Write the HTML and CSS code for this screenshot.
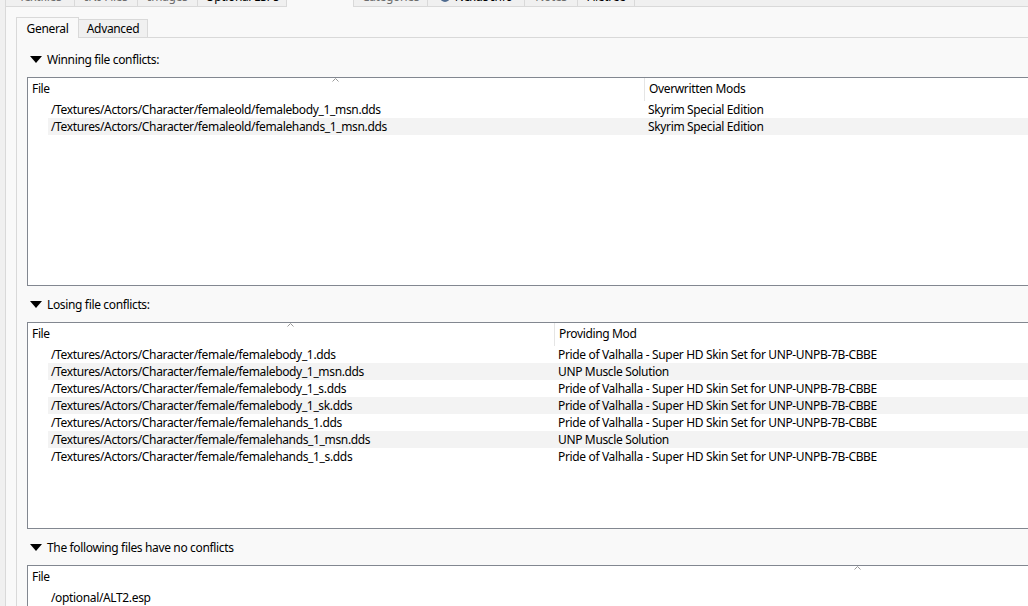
FILE: index.html
```html
<!DOCTYPE html>
<html lang="en">
<head>
  <meta charset="UTF-8" />
  <title>Conflicts</title>
  <link rel="stylesheet" href="styles.css">
</head>
<body>
  <div class="window">
    <div class="main-tabs">
      <div class="main-tab first" style="width:70px">Textfiles</div>
      <div class="main-tab" style="width:63px">INI-Files</div>
      <div class="main-tab" style="width:60px">Images</div>
      <div class="main-tab marked" style="width:89px">Optional ESPs</div>
      <div class="main-tab current" style="width:67px">Conflicts</div>
      <div class="main-tab" style="width:74px">Categories</div>
      <div class="main-tab marked" style="width:97px"><span class="globe"></span>Nexus Info</div>
      <div class="main-tab" style="width:53px">Notes</div>
      <div class="main-tab marked" style="width:57px">Filetree</div>
    </div>

    <div class="main-pane">
      <div class="sub-tabs">
        <div class="sub-tab current">General</div>
        <div class="sub-tab">Advanced</div>
      </div>

      <div class="sub-pane">
        <div class="group-head"><span class="caret"></span>Winning file conflicts:</div>
        <div class="list list-winning">
          <div class="list-head">
            <div class="head-cell file">File<svg class="sort" width="7" height="4" viewBox="0 0 7 4"><polyline points="0.5,3.5 3.5,0.5 6.5,3.5" fill="none" stroke="#9a9a9a" stroke-width="1"/></svg></div>
            <div class="head-cell">Overwritten Mods</div>
          </div>
          <div class="rows">
            <div class="row"><div class="file">/Textures/Actors/Character/femaleold/femalebody_1_msn.dds</div><div class="mod">Skyrim Special Edition</div></div>
            <div class="row"><div class="file">/Textures/Actors/Character/femaleold/femalehands_1_msn.dds</div><div class="mod">Skyrim Special Edition</div></div>
          </div>
        </div>

        <div class="group-head"><span class="caret"></span>Losing file conflicts:</div>
        <div class="list list-losing">
          <div class="list-head">
            <div class="head-cell file">File<svg class="sort" width="7" height="4" viewBox="0 0 7 4"><polyline points="0.5,3.5 3.5,0.5 6.5,3.5" fill="none" stroke="#9a9a9a" stroke-width="1"/></svg></div>
            <div class="head-cell">Providing Mod</div>
          </div>
          <div class="rows">
            <div class="row"><div class="file">/Textures/Actors/Character/female/femalebody_1.dds</div><div class="mod">Pride of Valhalla - Super HD Skin Set for UNP-UNPB-7B-CBBE</div></div>
            <div class="row"><div class="file">/Textures/Actors/Character/female/femalebody_1_msn.dds</div><div class="mod">UNP Muscle Solution</div></div>
            <div class="row"><div class="file">/Textures/Actors/Character/female/femalebody_1_s.dds</div><div class="mod">Pride of Valhalla - Super HD Skin Set for UNP-UNPB-7B-CBBE</div></div>
            <div class="row"><div class="file">/Textures/Actors/Character/female/femalebody_1_sk.dds</div><div class="mod">Pride of Valhalla - Super HD Skin Set for UNP-UNPB-7B-CBBE</div></div>
            <div class="row"><div class="file">/Textures/Actors/Character/female/femalehands_1.dds</div><div class="mod">Pride of Valhalla - Super HD Skin Set for UNP-UNPB-7B-CBBE</div></div>
            <div class="row"><div class="file">/Textures/Actors/Character/female/femalehands_1_msn.dds</div><div class="mod">UNP Muscle Solution</div></div>
            <div class="row"><div class="file">/Textures/Actors/Character/female/femalehands_1_s.dds</div><div class="mod">Pride of Valhalla - Super HD Skin Set for UNP-UNPB-7B-CBBE</div></div>
          </div>
        </div>

        <div class="group-head"><span class="caret"></span>The following files have no conflicts</div>
        <div class="list list-clean">
          <div class="list-head">
            <div class="head-cell file">File<svg class="sort" width="7" height="4" viewBox="0 0 7 4"><polyline points="0.5,3.5 3.5,0.5 6.5,3.5" fill="none" stroke="#9a9a9a" stroke-width="1"/></svg></div>
          </div>
          <div class="rows">
            <div class="row"><div class="file">/optional/ALT2.esp</div></div>
            <div class="row"><div class="file"></div></div>
          </div>
        </div>
      </div>
    </div>
  </div>
</body>
</html>
```

FILE: styles.css
```css
body {
  margin: 0;
  background: #f0f0f0;
  font-family: "Noto Sans", sans-serif;
  font-size: 12px;
  letter-spacing: -0.35px;
  color: #000;
  overflow: hidden;
}
.window {
  width: 1720px;
  padding-left: 5px;
}

/* top tab strip, mostly scrolled out of view */
.main-tabs {
  display: flex;
  align-items: flex-end;
  height: 20px;
  margin-top: -14px;
}
.main-tab {
  box-sizing: border-box;
  height: 20px;
  padding-top: 3px;
  line-height: 16px;
  text-align: center;
  white-space: nowrap;
  color: #6d6d6d;
  background: #f0f0f0;
  border-right: 1px solid #d9d9d9;
}
.main-tab.first {
  border-left: 1px solid #d9d9d9;
}
.main-tab.marked {
  color: #000;
}
.main-tab.current {
  position: relative;
  height: 21px;
  margin-bottom: -1px;
  padding-top: 0;
  color: #f9f9f9;
  background: #f9f9f9;
}
.globe {
  display: inline-block;
  width: 10px;
  height: 10px;
  margin-right: 5px;
  border-radius: 50%;
  background: #4f6b8f;
  vertical-align: -1px;
}

.main-pane {
  background: #f9f9f9;
  border-top: 1px solid #d9d9d9;
  border-left: 1px solid #d9d9d9;
  padding: 10px 0 0 10px;
}

/* General / Advanced */
.sub-tabs {
  display: flex;
  align-items: flex-end;
  height: 20px;
}
.sub-tab {
  box-sizing: border-box;
  width: 69px;
  height: 18px;
  line-height: 18px;
  text-align: center;
  background: #f0f0f0;
  border: 1px solid #d9d9d9;
  border-bottom: none;
  border-left: none;
}
.sub-tab.current {
  position: relative;
  width: 63px;
  height: 21px;
  margin-bottom: -1px;
  line-height: 21px;
  background: #f9f9f9;
  border-left: 1px solid #d9d9d9;
}

.sub-pane {
  background: #f9f9f9;
  border-top: 1px solid #d9d9d9;
  border-left: 1px solid #d9d9d9;
  padding: 3px 0 0 10px;
}

.group-head {
  display: flex;
  align-items: center;
  gap: 5px;
  height: 36px;
  padding-left: 3px;
}
.caret {
  width: 0;
  height: 0;
  border-left: 6px solid transparent;
  border-right: 6px solid transparent;
  border-top: 7px solid #000;
}

/* list views */
.list {
  box-sizing: border-box;
  width: 1661px;
  background: #fff;
  border: 1px solid #828790;
  overflow: hidden;
}
.list-winning {
  --file-col: 616px;
  height: 209px;
}
.list-losing {
  --file-col: 526px;
  height: 207px;
}
.list-clean {
  --file-col: 1659px;
  height: 200px;
}
.list-head {
  display: flex;
  height: 23px;
}
.head-cell {
  position: relative;
  box-sizing: border-box;
  padding-left: 4px;
  line-height: 22px;
  white-space: nowrap;
}
.head-cell.file {
  flex: 0 0 calc(var(--file-col) + 1px);
  border-right: 1px solid #e5e5e5;
}
.sort {
  position: absolute;
  top: 0;
  left: 50%;
  margin-left: -4px;
}
.row {
  display: flex;
  height: 17px;
  margin-left: 20px;
  line-height: 17px;
  white-space: nowrap;
}
.row:nth-child(even) {
  background: #f3f3f3;
}
.row .file {
  box-sizing: border-box;
  flex: 0 0 calc(var(--file-col) - 20px);
  padding-left: 3px;
}
.row .mod {
  padding-left: 4px;
}
```
